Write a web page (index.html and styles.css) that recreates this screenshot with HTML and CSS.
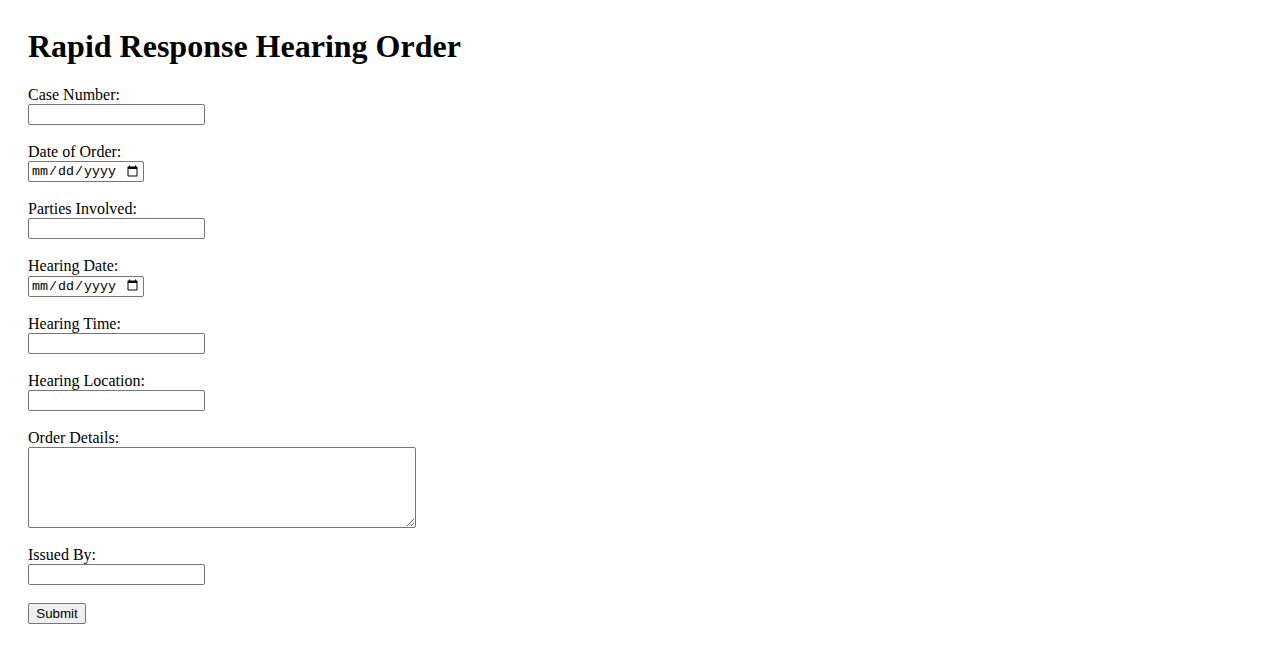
FILE: index.html
```html
<!DOCTYPE html>
<html lang="en">
<head>
<meta charset="utf-8">
<title>Rapid Response Hearing Order</title>
<link rel="stylesheet" href="styles.css">
</head>
<body>
<h1 class="title">Rapid Response Hearing Order</h1>
<form class="order-form">
  <label for="case">Case Number:</label><br>
  <input class="text-field" type="text" id="case" name="case"><br><br>
  <label for="orderDate">Date of Order:</label><br>
  <input class="date-field" type="date" id="orderDate" name="orderDate"><br><br>
  <label for="parties">Parties Involved:</label><br>
  <input class="text-field" type="text" id="parties" name="parties"><br><br>
  <label for="hearingDate">Hearing Date:</label><br>
  <input class="date-field" type="date" id="hearingDate" name="hearingDate"><br><br>
  <label for="hearingTime">Hearing Time:</label><br>
  <input class="text-field" type="text" id="hearingTime" name="hearingTime"><br><br>
  <label for="location">Hearing Location:</label><br>
  <input class="text-field" type="text" id="location" name="location"><br><br>
  <label for="details">Order Details:</label><br>
  <textarea class="area-field" id="details" name="details" rows="5" cols="50"></textarea><br><br>
  <label for="issuedBy">Issued By:</label><br>
  <input class="text-field" type="text" id="issuedBy" name="issuedBy"><br><br>
  <input class="submit-btn" type="submit" value="Submit">
</form>
</body>
</html>
```

FILE: styles.css
```css
html, body {
  background: #ffffff;
}
body {
  margin: 0;
  padding: 28px;
  font-family: "Liberation Serif", "Times New Roman", serif;
  font-size: 16px;
  color: #000;
}
.title {
  margin: 0 0 20.9px 0;
  font-size: 32px;
  font-weight: bold;
}
.order-form {
  margin: 0;
  line-height: 18.1px;
}
.text-field {
  box-sizing: border-box;
  width: 177px;
  height: 21px;
  border: 1px solid #767676;
  border-radius: 2px;
  padding: 1px 2px;
  font-family: "Liberation Sans", Arial, sans-serif;
  font-size: 13.33px;
  margin: 0;
}
.date-field {
  box-sizing: border-box;
  width: 116px;
  height: 21px;
  border: 1px solid #767676;
  border-radius: 2px;
  padding: 1px 2px;
  font-family: "Liberation Mono", monospace;
  font-size: 13.33px;
  margin: 0;
}
.area-field {
  box-sizing: border-box;
  width: 388px;
  height: 81px;
  border: 1px solid #767676;
  border-radius: 2px;
  padding: 2px;
  font-family: "Liberation Mono", monospace;
  font-size: 13px;
  margin: 0;
  vertical-align: bottom;
}
.submit-btn {
  box-sizing: border-box;
  height: 21px;
  width: 58px;
  padding: 1px 6px;
  border: 1px solid #767676;
  border-radius: 2px;
  background: #efefef;
  font-family: "Liberation Sans", Arial, sans-serif;
  font-size: 13.33px;
  color: #000;
  margin: 0;
}
```
